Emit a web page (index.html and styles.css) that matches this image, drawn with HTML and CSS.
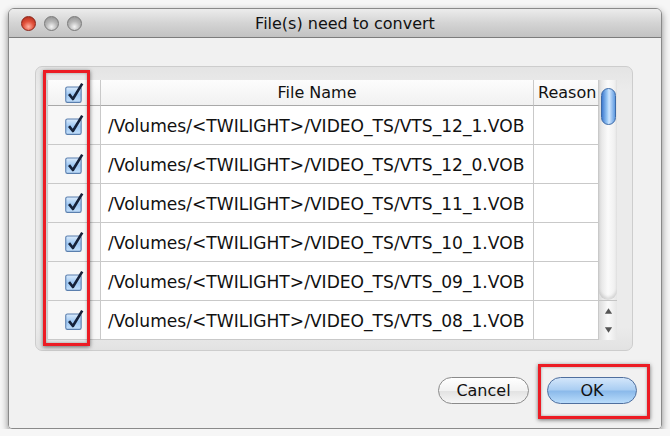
FILE: index.html
```html
<!DOCTYPE html>
<html lang="en">
<head>
    <meta charset="UTF-8">
    <title>File(s) need to convert</title>
    <link rel="stylesheet" href="styles.css">
</head>
<body>
    <div class="window">
        <div class="titlebar">
            <div class="lights">
                <span class="light red"></span>
                <span class="light"></span>
                <span class="light"></span>
            </div>
            <div class="title">File(s) need to convert</div>
            <div></div>
        </div>
        <div class="content">
            <div class="groupbox">
                <div class="mark mark-col"></div>
                <div class="table">
                    <div class="grid">
                        <div class="cell check head"><svg class="cb" viewBox="0 0 20 20"><defs><linearGradient id="g" x1="0" y1="0" x2="0" y2="1"><stop offset="0" stop-color="#dcecfc"/><stop offset=".5" stop-color="#9cc6f2"/><stop offset="1" stop-color="#c4e0fb"/></linearGradient></defs><rect x="2.5" y="4.5" width="14" height="14" rx="1.5" fill="url(#g)" stroke="#5a7fae"/><path d="M5.5 11 L9 15.5 L17.5 1.5" fill="none" stroke="#16223a" stroke-width="2.4" stroke-linejoin="round"/></svg></div>
                        <div class="cell head">File Name</div>
                        <div class="cell head reason">Reason</div>

                        <div class="cell check"><svg class="cb" viewBox="0 0 20 20"><rect x="2.5" y="4.5" width="14" height="14" rx="1.5" fill="url(#g)" stroke="#5a7fae"/><path d="M5.5 11 L9 15.5 L17.5 1.5" fill="none" stroke="#16223a" stroke-width="2.4" stroke-linejoin="round"/></svg></div>
                        <div class="cell name">/Volumes/&lt;TWILIGHT&gt;/VIDEO_TS/VTS_12_1.VOB</div>
                        <div class="cell"></div>

                        <div class="cell check"><svg class="cb" viewBox="0 0 20 20"><rect x="2.5" y="4.5" width="14" height="14" rx="1.5" fill="url(#g)" stroke="#5a7fae"/><path d="M5.5 11 L9 15.5 L17.5 1.5" fill="none" stroke="#16223a" stroke-width="2.4" stroke-linejoin="round"/></svg></div>
                        <div class="cell name">/Volumes/&lt;TWILIGHT&gt;/VIDEO_TS/VTS_12_0.VOB</div>
                        <div class="cell"></div>

                        <div class="cell check"><svg class="cb" viewBox="0 0 20 20"><rect x="2.5" y="4.5" width="14" height="14" rx="1.5" fill="url(#g)" stroke="#5a7fae"/><path d="M5.5 11 L9 15.5 L17.5 1.5" fill="none" stroke="#16223a" stroke-width="2.4" stroke-linejoin="round"/></svg></div>
                        <div class="cell name">/Volumes/&lt;TWILIGHT&gt;/VIDEO_TS/VTS_11_1.VOB</div>
                        <div class="cell"></div>

                        <div class="cell check"><svg class="cb" viewBox="0 0 20 20"><rect x="2.5" y="4.5" width="14" height="14" rx="1.5" fill="url(#g)" stroke="#5a7fae"/><path d="M5.5 11 L9 15.5 L17.5 1.5" fill="none" stroke="#16223a" stroke-width="2.4" stroke-linejoin="round"/></svg></div>
                        <div class="cell name">/Volumes/&lt;TWILIGHT&gt;/VIDEO_TS/VTS_10_1.VOB</div>
                        <div class="cell"></div>

                        <div class="cell check"><svg class="cb" viewBox="0 0 20 20"><rect x="2.5" y="4.5" width="14" height="14" rx="1.5" fill="url(#g)" stroke="#5a7fae"/><path d="M5.5 11 L9 15.5 L17.5 1.5" fill="none" stroke="#16223a" stroke-width="2.4" stroke-linejoin="round"/></svg></div>
                        <div class="cell name">/Volumes/&lt;TWILIGHT&gt;/VIDEO_TS/VTS_09_1.VOB</div>
                        <div class="cell"></div>

                        <div class="cell check"><svg class="cb" viewBox="0 0 20 20"><rect x="2.5" y="4.5" width="14" height="14" rx="1.5" fill="url(#g)" stroke="#5a7fae"/><path d="M5.5 11 L9 15.5 L17.5 1.5" fill="none" stroke="#16223a" stroke-width="2.4" stroke-linejoin="round"/></svg></div>
                        <div class="cell name">/Volumes/&lt;TWILIGHT&gt;/VIDEO_TS/VTS_08_1.VOB</div>
                        <div class="cell"></div>
                    </div>
                    <div class="scrollbar">
                        <div class="track">
                            <div class="thumb"></div>
                        </div>
                        <div class="arrows">
                            <svg viewBox="0 0 10 8" class="arrow"><path d="M5 1 L9 7 L1 7 Z" fill="#555"/></svg>
                            <svg viewBox="0 0 10 8" class="arrow"><path d="M1 1 L9 1 L5 7 Z" fill="#555"/></svg>
                        </div>
                    </div>
                </div>
            </div>
            <div class="buttons">
                <div class="btn cancel">Cancel</div>
                <div class="btn ok">OK<div class="mark mark-ok"></div></div>
            </div>
        </div>
    </div>
</body>
</html>
```

FILE: styles.css
```css
body {
    margin: 0;
    padding: 8px 0 0 8px;
    background-color: #f6f6f6;
    font-family: "DejaVu Sans", Verdana, sans-serif;
    color: #111;
}
.window {
    box-sizing: border-box;
    width: 654px;
    height: 421px;
    border: 1px solid #8a8a8a;
    border-radius: 6px 6px 4px 4px;
    overflow: hidden;
    box-shadow: 0 3px 7px rgba(0, 0, 0, 0.45);
    display: flex;
    flex-direction: column;
}
.titlebar {
    height: 28px;
    border-bottom: 1px solid #7c7c7c;
    background: linear-gradient(#ececec, #d4d4d4 50%, #c2c2c2);
    display: grid;
    grid-template-columns: 1fr auto 1fr;
    align-items: center;
}
.lights {
    display: flex;
    gap: 8px;
    padding-left: 12px;
}
.light {
    width: 15px;
    height: 15px;
    border-radius: 50%;
    border: 1px solid #7a7a7a;
    background: radial-gradient(circle at 50% 75%, #f4f4f4 0%, #b8b8b8 45%, #8a8a8a 100%);
    box-sizing: border-box;
}
.light.red {
    border-color: #8d2418;
    background: radial-gradient(circle at 50% 75%, #ffb3a3 0%, #e2523c 45%, #a52414 100%);
}
.title {
    font-size: 16px;
    color: #111;
    padding-left: 20px;
}
.content {
    flex: 1;
    background-color: #f1f1f1;
    padding: 28px 0 0 26px;
}
.groupbox {
    position: relative;
    box-sizing: border-box;
    width: 598px;
    height: 285px;
    border: 1px solid #cdcdcd;
    border-radius: 7px;
    background: linear-gradient(#e4e4e4, #ebebeb 8%, #ebebeb 92%, #e2e2e2);
    padding: 13px 0 0 11px;
}
.table {
    display: flex;
    width: 570px;
    height: 260px;
    background-color: #fff;
}
.grid {
    display: grid;
    grid-template-columns: 53px 433px 65px;
    grid-template-rows: 26px repeat(6, 39px);
    border-left: 1px solid #d4d4d4;
}
.cell {
    box-sizing: border-box;
    border-right: 1px solid #c9c9c9;
    border-bottom: 1px solid #c9c9c9;
    display: flex;
    align-items: center;
    overflow: hidden;
    white-space: nowrap;
}
.head {
    justify-content: center;
    font-size: 16px;
    background: linear-gradient(#fdfdfd, #f1f1f1);
    border-bottom-color: #a9a9a9;
}
.head.reason {
    justify-content: flex-start;
    padding-left: 4px;
}
.check {
    justify-content: center;
    background-color: #f7f7f7;
}
.cb {
    width: 22px;
    height: 22px;
}
.name {
    font-size: 17.1px;
    padding-left: 7px;
    padding-top: 2px;
}
.scrollbar {
    width: 19px;
    display: flex;
    flex-direction: column;
    background: linear-gradient(90deg, #dcdcdc, #fafafa 50%, #e6e6e6);
}
.track {
    height: 212px;
    padding: 8px 0 0 2px;
    border-radius: 0 0 9px 9px;
    box-shadow: inset 0 -3px 3px rgba(0, 0, 0, 0.12);
    background: linear-gradient(90deg, #e0e0e0, #fbfbfb 50%, #ececec);
}
.thumb {
    width: 15px;
    height: 37px;
    border-radius: 8px;
    box-sizing: border-box;
    border: 1px solid #3c6aa8;
    background: linear-gradient(90deg, #3f7bd0, #9ccaf6 40%, #cfe6ff 55%, #5f9ae0);
}
.arrows {
    flex: 1;
    display: flex;
    flex-direction: column;
    align-items: center;
    justify-content: space-around;
    border-top: 1px solid #c4c4c4;
}
.arrow {
    width: 9px;
    height: 8px;
}
.buttons {
    display: flex;
    justify-content: flex-end;
    gap: 18px;
    margin-top: 26px;
    padding-right: 24px;
}
.btn {
    position: relative;
    box-sizing: border-box;
    width: 91px;
    height: 27px;
    border-radius: 14px;
    display: flex;
    align-items: center;
    justify-content: center;
    font-size: 16px;
    border: 1px solid #8b8b8b;
    background: linear-gradient(#ffffff, #f2f2f2 50%, #e2e2e2 52%, #f6f6f6);
}
.btn.ok {
    width: 90px;
    border-color: #4f6f9e;
    background: linear-gradient(#d3e6fa, #a9cdf2 48%, #8ab9ea 52%, #b9dcfb);
}
.mark {
    position: absolute;
    border: 3px solid #ec1c24;
    box-shadow: 0 1px 4px rgba(0, 0, 0, 0.55), inset 0 0 3px rgba(0, 0, 0, 0.35);
    pointer-events: none;
}
.mark-col {
    left: 7px;
    top: 3px;
    width: 41px;
    height: 270px;
}
.mark-ok {
    left: -10px;
    top: -14px;
    width: 106px;
    height: 49px;
}
```
